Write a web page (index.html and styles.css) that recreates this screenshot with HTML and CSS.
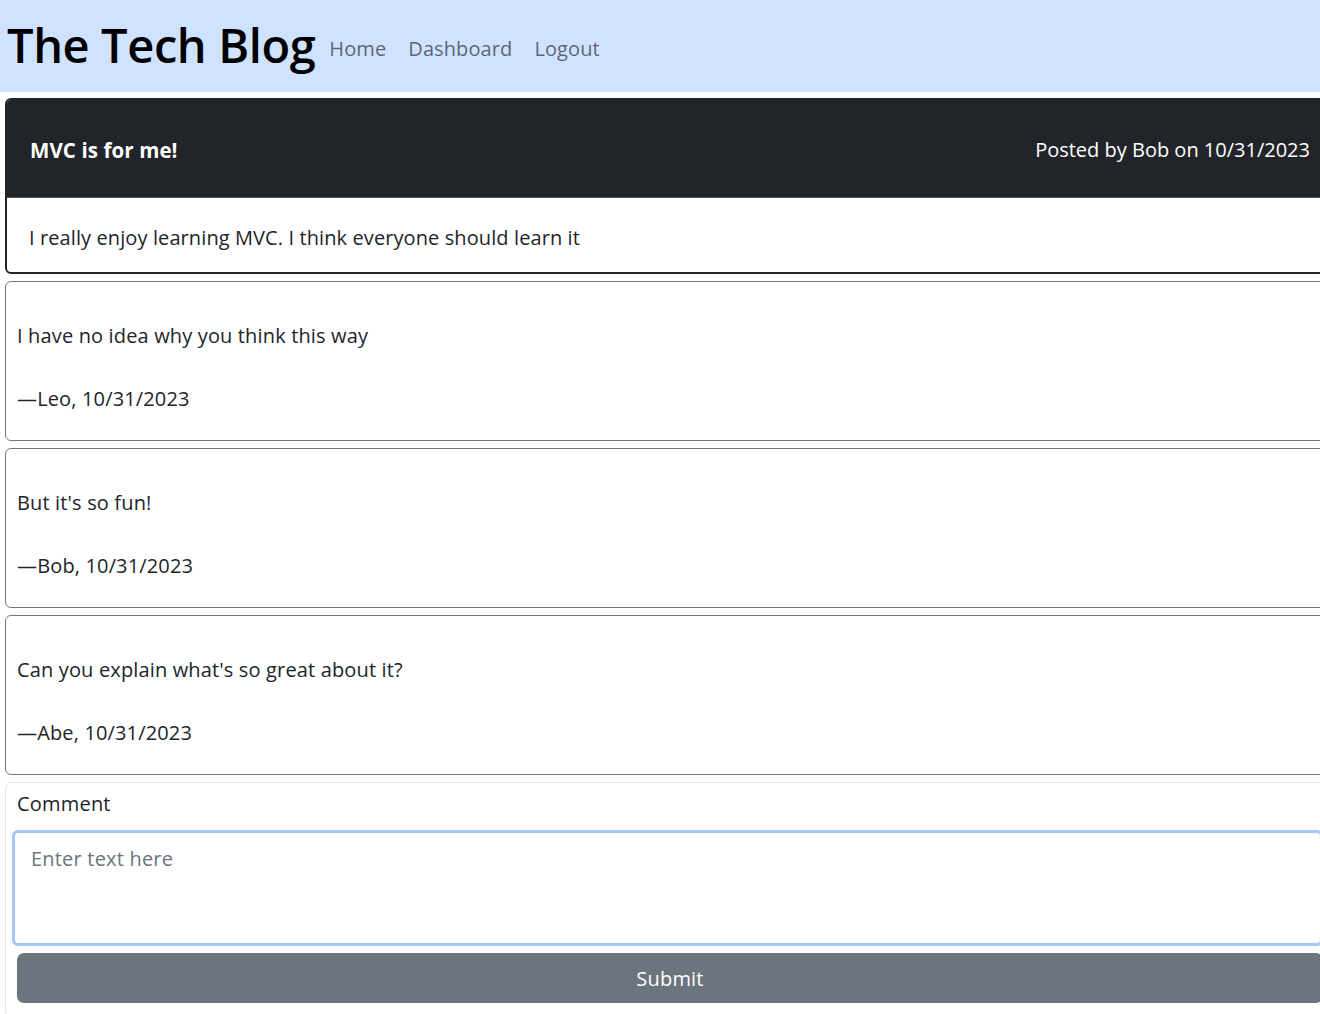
FILE: index.html
```html
<!DOCTYPE html>
<html lang="en">
<head>
<meta charset="utf-8">
<title>The Tech Blog</title>
<link rel="stylesheet" href="styles.css">
</head>
<body>
<header class="topbar">
  <h1 class="brand">The Tech Blog</h1>
  <nav class="nav">
    <a href="#" class="nav-link">Home</a>
    <a href="#" class="nav-link">Dashboard</a>
    <a href="#" class="nav-link">Logout</a>
  </nav>
</header>
<main class="main">
  <article class="post">
    <div class="post-head">
      <span class="post-title">MVC is for me!</span>
      <span class="post-meta">Posted by Bob on 10/31/2023</span>
    </div>
    <div class="post-body">I really enjoy learning MVC. I think everyone should learn it</div>
  </article>
  <div class="comment">
    <p class="comment-text">I have no idea why you think this way</p>
    <p class="comment-by">—Leo, 10/31/2023</p>
  </div>
  <div class="comment">
    <p class="comment-text">But it's so fun!</p>
    <p class="comment-by">—Bob, 10/31/2023</p>
  </div>
  <div class="comment">
    <p class="comment-text">Can you explain what's so great about it?</p>
    <p class="comment-by">—Abe, 10/31/2023</p>
  </div>
  <form class="comment-form">
    <label class="form-label" for="c">Comment</label>
    <textarea id="c" class="form-text" placeholder="Enter text here"></textarea>
    <button type="button" class="btn">Submit</button>
  </form>
</main>
</body>
</html>
```
FILE: styles.css
```css
html { overflow-x: hidden; }
body {
  margin: 0;
  font-family: "Open Sans", "Noto Sans", sans-serif;
  color: #212529;
  background: #fff;
  width: 1340px;
}
.topbar {
  background: #cfe2ff;
  height: 92px;
  display: flex;
  align-items: center;
  padding: 0 0 0 7px;
  gap: 14px;
}
.brand {
  margin: 0;
  font-weight: 600;
  font-size: 47px;
  letter-spacing: -0.4px;
  color: #000;
  line-height: 1;
  padding-bottom: 2px;
}
.nav { display: flex; gap: 22px; padding-top: 4px; }
.nav-link {
  color: rgba(0,0,0,0.58);
  text-decoration: none;
  font-size: 20px;
  letter-spacing: 0.1px;
}
.main {
  padding: 6px 0 0 5px;
  width: 1330px;
  display: flex;
  flex-direction: column;
  gap: 7px;
}
.post {
  border: 2px solid #212529;
  border-radius: 6px;
  overflow: hidden;
}
.post-head {
  background: #212529;
  color: #fff;
  height: 97px;
  display: flex;
  align-items: center;
  justify-content: space-between;
  padding: 2px 23px 0;
  box-sizing: border-box;
  font-size: 20px;
}
.post-title { font-weight: 700; font-size: 20.5px; letter-spacing: 0.1px; }
.post-body {
  height: 75px;
  display: flex;
  align-items: center;
  padding: 4px 22px 0;
  box-sizing: border-box;
  font-size: 20px;
  letter-spacing: 0.1px;
  border-top: 1px solid #555;
}
.comment {
  border: 1px solid #777;
  border-radius: 6px;
  height: 158px;
  padding: 0 11px;
  font-size: 20px;
  letter-spacing: 0.15px;
}
.comment-text { margin: 40px 0 0; line-height: 27px; }
.comment-by { margin: 36px 0 0; line-height: 27px; }
.comment-form {
  border: 1px solid #e3e5e8;
  border-radius: 6px;
  height: 226px;
  padding: 8px 11px 0 11px;
  display: flex;
  flex-direction: column;
}
.form-label { font-size: 20px; letter-spacing: 0.2px; line-height: 26px; margin-bottom: 13px; }
.form-text {
  margin-left: -5px;
  height: 116px;
  box-sizing: border-box;
  border: 3px solid #a4c6f7;
  border-radius: 6px;
  padding: 12px 16px;
  font-family: inherit;
  font-size: 20px;
  letter-spacing: 0.2px;
  resize: none;
  outline: none;
}
.form-text::placeholder { color: #6c757d; }
.btn {
  margin-top: 7px;
  height: 50px;
  border: none;
  border-radius: 7px;
  background: #6c757d;
  color: #fff;
  font-family: inherit;
  font-size: 20px;
  letter-spacing: 0.2px;
}
```
